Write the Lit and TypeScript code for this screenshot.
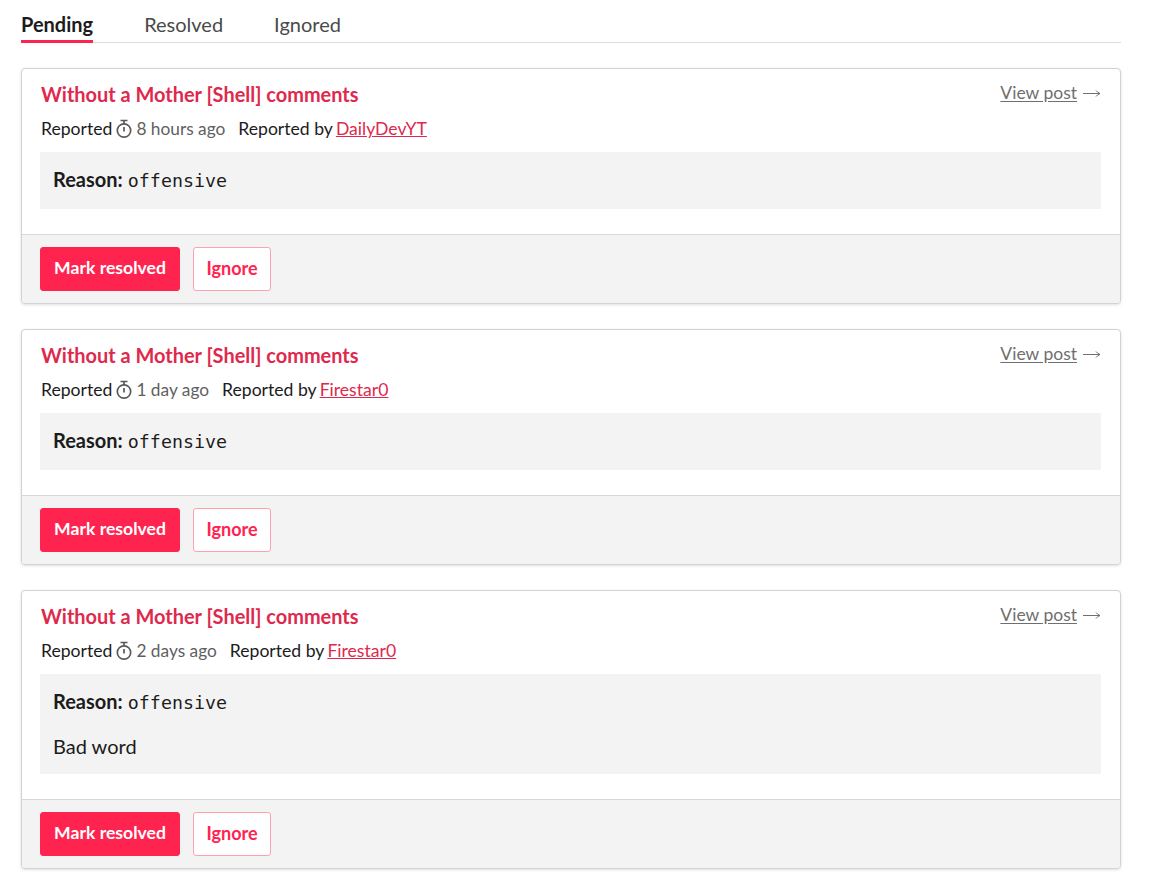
import { LitElement, html, css } from "lit";
import { customElement } from "lit/decorators.js";

interface Report { ago: string; by: string; note?: string; }

const reports: Report[] = [
  { ago: "8 hours ago", by: "DailyDevYT" },
  { ago: "1 day ago", by: "Firestar0" },
  { ago: "2 days ago", by: "Firestar0", note: "Bad word" },
];

@customElement("app-root")
export class AppRoot extends LitElement {
  static styles = css`
    :host { display: block; font-family: Lato, sans-serif; color: #1c1c1c; font-size: 17.6px; }
    .page { width: 1100px; margin-left: 21px; padding-top: 10px; }
    .tabs { display: flex; gap: 51px; border-bottom: 1px solid #dcdcdc; height: 32px; margin-bottom: 25px; }
    .tab { font-size: 20px; line-height: 28px; color: #4a4a4a; height: 33px; box-sizing: border-box; }
    .tab.active { color: #1c1c1c; font-weight: 700; border-bottom: 3px solid #ff2450; }
    .card { border: 1px solid #d2d2d2; border-radius: 4px; box-shadow: 0 1px 3px rgba(0,0,0,.12); margin-bottom: 25px; overflow: hidden; background: #fff; }
    .body { padding: 11px 19px 25px 18px; }
    .head { display: flex; justify-content: space-between; align-items: flex-start; padding-left: 1px; }
    .title { font-size: 19.95px; line-height: 28px; font-weight: 700; color: #de294d; }
    .view { display: flex; align-items: center; gap: 6px; font-size: 17.5px; line-height: 24px; color: #6f6f6f; padding-top: 1px; }
    .view u { text-underline-offset: 2px; }
    .view svg { display: block; }
    .meta { display: flex; align-items: center; line-height: 26px; margin-top: 8px; margin-bottom: 10px; padding-left: 1px; }
    .time { color: #5f5f5f; font-size: 17.3px; margin-right: 13px; display: inline-flex; align-items: center; }
    .time svg { margin: 0 3px 0 3px; }
    .meta a { color: #de294d; text-decoration: underline; margin-left: 3px; }
    .reason { background: #f3f3f3; padding: 13px; display: flex; flex-direction: column; gap: 13px; font-size: 20px; }
    .line { line-height: 30px; }
    .line.first { line-height: 29px; height: 31px; }
    .line b { font-weight: 700; }
    code { font-family: "DejaVu Sans Mono", monospace; font-size: 18.3px; line-height: 1; }
    .foot { background: #f3f3f3; border-top: 1px solid #d8d8d8; padding: 12px 18px; display: flex; gap: 13px; }
    .btn { height: 44px; box-sizing: border-box; border-radius: 3px; font: 700 17.6px/40px Lato, sans-serif; border: 1px solid #ff2450; padding: 0 0 2px; text-align: center; }
    .primary { width: 140px; background: #ff2450; color: #fff; }
    .ghost { width: 78px; background: #fff; color: #ff2450; border-color: #ffa0b3; font-size: 18px; }
  `;

  private stopwatch() {
    return html`<svg width="18" height="20" viewBox="0 0 18 20" fill="none" stroke="#5a5a5a" stroke-width="1.7">
      <circle cx="9" cy="11.5" r="6.7"></circle>
      <path d="M5.5 1.5h7M9 1.5v3.5M9 8v4.5"></path>
    </svg>`;
  }

  private arrow() {
    return html`<svg width="18" height="10" viewBox="0 0 18 10" fill="none" stroke="#6f6f6f" stroke-width="1">
      <path d="M0 5.500h17M13 2.500q1.500 2 4 3q-2.500 1-4 3"></path>
    </svg>`;
  }

  render() {
    return html`<div class="page">
      <div class="tabs">
        <div class="tab active">Pending</div>
        <div class="tab">Resolved</div>
        <div class="tab">Ignored</div>
      </div>
      ${reports.map((r) => html`<div class="card">
        <div class="body">
          <div class="head">
            <div class="title">Without a Mother [Shell] comments</div>
            <div class="view"><u>View post</u>${this.arrow()}</div>
          </div>
          <div class="meta">
            <span>Reported</span>
            <span class="time">${this.stopwatch()}${r.ago}</span>
            <span>Reported by</span><a>${r.by}</a>
          </div>
          <div class="reason">
            <div class="line first"><b>Reason:</b> <code>offensive</code></div>
            ${r.note ? html`<div class="line">${r.note}</div>` : ""}
          </div>
        </div>
        <div class="foot">
          <button class="btn primary">Mark resolved</button>
          <button class="btn ghost">Ignore</button>
        </div>
      </div>`)}
    </div>`;
  }
}
